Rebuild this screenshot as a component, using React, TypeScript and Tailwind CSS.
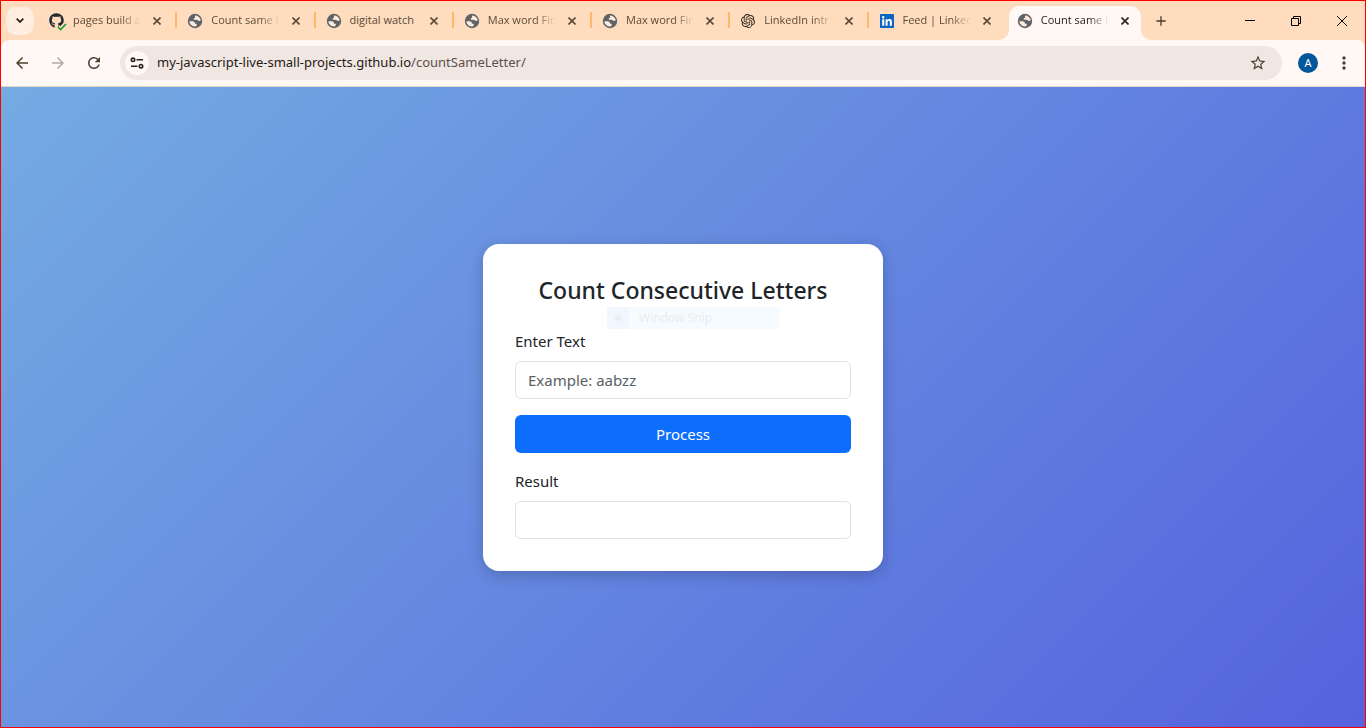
import { useState } from "react";
import type { ReactNode } from "react";
import { SiOpenai } from "react-icons/si";
import { FaGithub } from "react-icons/fa";
import { MdArrowBack, MdArrowForward, MdRefresh, MdStarOutline, MdAdd, MdMoreVert } from "react-icons/md";

function GlobeIcon() {
  return (
    <svg viewBox="0 0 16 16" className="size-4" aria-hidden="true">
      <circle cx="8" cy="8" r="7.200" fill="#5f6368" />
      <path
        fill="#fcebdc"
        d="M8.300 2.400C10.400 2.500 12.300 3.700 13.200 5.600c.3.700.4 1.300.4 2-.8.600-2 .5-2.700-.1-.5-.5-.8-.8-1.500-.8-.9 0-1.400.3-2.100.1-.9-.3-.9-1.200-.2-1.600.6-.4 1.100-.4 1.100-1 0-.7-.5-.9.100-1.800zM2.400 8.300h3.300c1.200 0 2.100.8 2.100 1.800 0 .5.300.7.800.7h.5c.6 0 .8.500.7 1l-.2.700c-.1.500-.5.800-1 .9l-.8.100C4.800 13.300 2.500 11.200 2.400 8.300z"
      />
    </svg>
  );
}

function GithubIcon() {
  return (
    <span className="relative block size-4">
      <FaGithub className="size-[15px] text-[#24292f]" />
      <svg viewBox="0 0 10 8" className="absolute -right-0.5 -bottom-0.5 h-2 w-2.5" aria-hidden="true">
        <path d="M1 4l2.500 2.500L9 1" fill="none" stroke="#fedcbd" strokeWidth="5" />
        <path d="M1 4l2.500 2.500L9 1" fill="none" stroke="#1a9c35" strokeWidth="1.600" />
      </svg>
    </span>
  );
}

function LinkedinIcon() {
  return (
    <svg viewBox="0 0 16 16" className="size-3.5" aria-hidden="true">
      <rect width="16" height="16" rx="1" fill="#0a66c2" />
      <path
        fill="#fff"
        d="M2.500 6h2.400v7.500H2.500zM3.700 2.400a1.400 1.400 0 1 1 0 2.800 1.400 1.400 0 0 1 0-2.800zM6.400 6h2.300v1c.4-.7 1.200-1.200 2.300-1.200 2.100 0 2.600 1.400 2.600 3.300v4.400h-2.400V9.600c0-.9 0-1.800-1.200-1.800s-1.300.9-1.300 1.800v3.900H6.400z"
      />
    </svg>
  );
}

function CrossIcon() {
  return (
    <svg viewBox="0 0 8 8" className="size-2" aria-hidden="true">
      <path d="M.5.5l7 7M7.500.5l-7 7" stroke="currentColor" strokeWidth="1.600" fill="none" />
    </svg>
  );
}

const tabs: { title: string; icon: ReactNode }[] = [
  { title: "pages build a", icon: <GithubIcon /> },
  { title: "Count same l", icon: <GlobeIcon /> },
  { title: "digital watch", icon: <GlobeIcon /> },
  { title: "Max word Fin", icon: <GlobeIcon /> },
  { title: "Max word Fin", icon: <GlobeIcon /> },
  { title: "LinkedIn intr", icon: <SiOpenai className="size-3.5 text-[#2b2118]" /> },
  { title: "Feed | Linked", icon: <LinkedinIcon /> },
  { title: "Count same l", icon: <GlobeIcon /> },
];

function TabStrip() {
  const active = tabs.length - 1;
  return (
    <div className="flex h-[39px] bg-[#fedcbd]">
      <div className="flex w-10 shrink-0 items-center pl-[5px]">
        <button aria-label="Search tabs" className="flex size-7 items-center justify-center rounded-[10px] bg-[#ffeee0]">
          <svg viewBox="0 0 8 5" className="h-[5px] w-2" aria-hidden="true">
            <path d="M.7.7L4 4 7.300.7" stroke="#1f1a15" strokeWidth="1.700" fill="none" />
          </svg>
        </button>
      </div>
      <div className="flex min-w-0 flex-1">
        {tabs.map((tab, i) => (
          <div key={i} className="flex min-w-0 flex-1 pt-[5px]">
            <div
              className={
                i === active
                  ? "relative flex min-w-0 flex-1 items-center rounded-t-[10px] bg-[#fff8f5] pb-[5px] pl-2 text-[#2a211a]"
                  : "flex min-w-0 flex-1 items-center pb-[5px] pl-2 text-[#5c4a38]"
              }
            >
              {i === active && (
                <>
                  <span className="absolute bottom-0 -left-2.5 size-2.5 bg-[radial-gradient(circle_at_0_0,#fedcbd_9.500px,#fff8f5_10px)]" />
                  <span className="absolute -right-2.5 bottom-0 size-2.5 bg-[radial-gradient(circle_at_100%_0,#fedcbd_9.500px,#fff8f5_10px)]" />
                </>
              )}
              <span className="flex size-4 shrink-0 items-center justify-center">{tab.icon}</span>
              <span
                className={
                  tab.title === "digital watch"
                    ? "ml-2 min-w-0 flex-1 overflow-hidden font-['Open_Sans',sans-serif] text-[11px] whitespace-nowrap"
                    : "ml-2 min-w-0 flex-1 overflow-hidden font-['Open_Sans',sans-serif] text-[11px] whitespace-nowrap [mask-image:linear-gradient(to_right,#000_70%,transparent)]"
                }
              >
                {tab.title}
              </span>
              <button aria-label={"Close " + tab.title} className="flex w-8 shrink-0 items-center justify-center">
                <CrossIcon />
              </button>
            </div>
            <div className="flex w-[6px] shrink-0 justify-center pt-[6px]">
              {i < active - 1 && <span className="h-4 w-0.5 bg-[#ffb868]" />}
            </div>
          </div>
        ))}
      </div>
      <div className="flex w-[218px] shrink-0 justify-between">
        <button aria-label="New tab" className="flex w-7 items-center justify-center text-[#4a3b2c]">
          <MdAdd className="size-4" />
        </button>
        <div className="flex text-black">
          <button aria-label="Minimize" className="flex w-[46px] items-center justify-center">
            <span className="h-px w-2.5 bg-black" />
          </button>
          <button aria-label="Restore" className="flex w-[46px] items-center justify-center">
            <svg viewBox="0 0 10 10" className="size-2.5" aria-hidden="true">
              <path d="M.5 2.500h7v7h-7zM2.500 2.500v-2h7v7h-2" fill="none" stroke="currentColor" />
            </svg>
          </button>
          <button aria-label="Close window" className="flex w-[46px] items-center justify-center">
            <svg viewBox="0 0 10 10" className="size-2.5" aria-hidden="true">
              <path d="M0 0l10 10M10 0L0 10" stroke="currentColor" fill="none" />
            </svg>
          </button>
        </div>
      </div>
    </div>
  );
}

function Toolbar() {
  return (
    <div className="bg-[#fedcbd]">
      <div className="flex h-[47px] items-center rounded-t-lg border-b border-[#e6d5c9] bg-[#fff8f5] px-[9px] text-[#4f3f2f]">
        <button aria-label="Back" className="flex w-6 justify-center">
          <MdArrowBack className="size-[18px]" />
        </button>
        <button aria-label="Forward" className="ml-3 flex w-6 justify-center text-[#b3aaa4]">
          <MdArrowForward className="size-[18px]" />
        </button>
        <button aria-label="Reload" className="ml-3 flex w-6 justify-center">
          <MdRefresh className="size-[18px]" />
        </button>
        <div className="ml-[14px] flex h-[34px] min-w-0 flex-1 items-center rounded-full bg-[#f0e7e2] pr-[15px] pl-[5px]">
          <button aria-label="Site information" className="flex size-6 shrink-0 items-center justify-center rounded-full bg-[#fff8f5]">
            <svg viewBox="0 0 14 12" className="h-3 w-3.5" aria-hidden="true">
              <g fill="none" stroke="#2a211a" strokeWidth="1.600">
                <circle cx="3" cy="2.800" r="1.700" />
                <path d="M6.500 2.800H13M1 9.200h6.500" />
                <circle cx="11" cy="9.200" r="1.700" />
              </g>
            </svg>
          </button>
          <span className="ml-2 flex-1 truncate text-[13px] text-[#1f1a15]">
            my-javascript-live-small-projects.github.io<span className="text-[#5c504a]">/countSameLetter/</span>
          </span>
          <button aria-label="Bookmark this page" className="flex">
            <MdStarOutline className="size-[18px]" />
          </button>
        </div>
        <button aria-label="Profile" className="ml-4 flex size-5 items-center justify-center rounded-full bg-[#01579b] text-[11px] text-white">
          A
        </button>
        <button aria-label="Menu" className="ml-3.5 flex w-6 justify-center">
          <MdMoreVert className="size-5" />
        </button>
      </div>
    </div>
  );
}

// Groups runs of the same letter, e.g. "aabzz" becomes "a2b1z2".
function countRuns(text: string) {
  return (text.match(/(.)\1*/g) ?? []).map((run) => run[0] + run.length).join("");
}

export default function App() {
  const [text, setText] = useState("");
  const [result, setResult] = useState("");
  const field =
    "block h-[38px] w-full rounded-md border border-[#dee2e6] bg-white px-3 text-[15px] text-[#212529] placeholder:text-[#595f64]";

  return (
    <div className="flex min-h-screen flex-col border border-[#ff0000] font-['Noto_Sans','Open_Sans',sans-serif]">
      <header>
        <TabStrip />
        <Toolbar />
      </header>
      <main className="flex flex-1 items-center justify-center bg-[linear-gradient(135deg,#74abe2,#5563de)]">
        <section className="relative w-full max-w-[400px] rounded-2xl bg-white p-8 text-[15px] leading-6 text-[#212529] shadow-[0_4px_15px_rgba(0,0,0,0.2)]">
          <h1 className="mb-6 text-center text-[23px] leading-[29px] font-medium">Count Consecutive Letters</h1>
          <div className="absolute top-[63px] left-[124px] flex h-[22px] w-[173px] items-center bg-[#f5fbff] text-xs text-[#ececec]">
            <span className="flex h-full w-[22px] items-center justify-center bg-[#f0f7ff]">
              <span className="size-1.5 rounded-full bg-[#ececec]" />
            </span>
            <span className="ml-[10px]">Window Snip</span>
          </div>
          <label htmlFor="source" className="mb-2 block">
            Enter Text
          </label>
          <input id="source" className={field} placeholder="Example: aabzz" value={text} onChange={(e) => setText(e.target.value)} />
          <button className="my-4 block h-[38px] w-full rounded-md bg-[#0d6efd] text-white" onClick={() => setResult(countRuns(text))}>
            Process
          </button>
          <label htmlFor="result" className="mb-2 block">
            Result
          </label>
          <input id="result" className={field} readOnly value={result} />
        </section>
      </main>
    </div>
  );
}
